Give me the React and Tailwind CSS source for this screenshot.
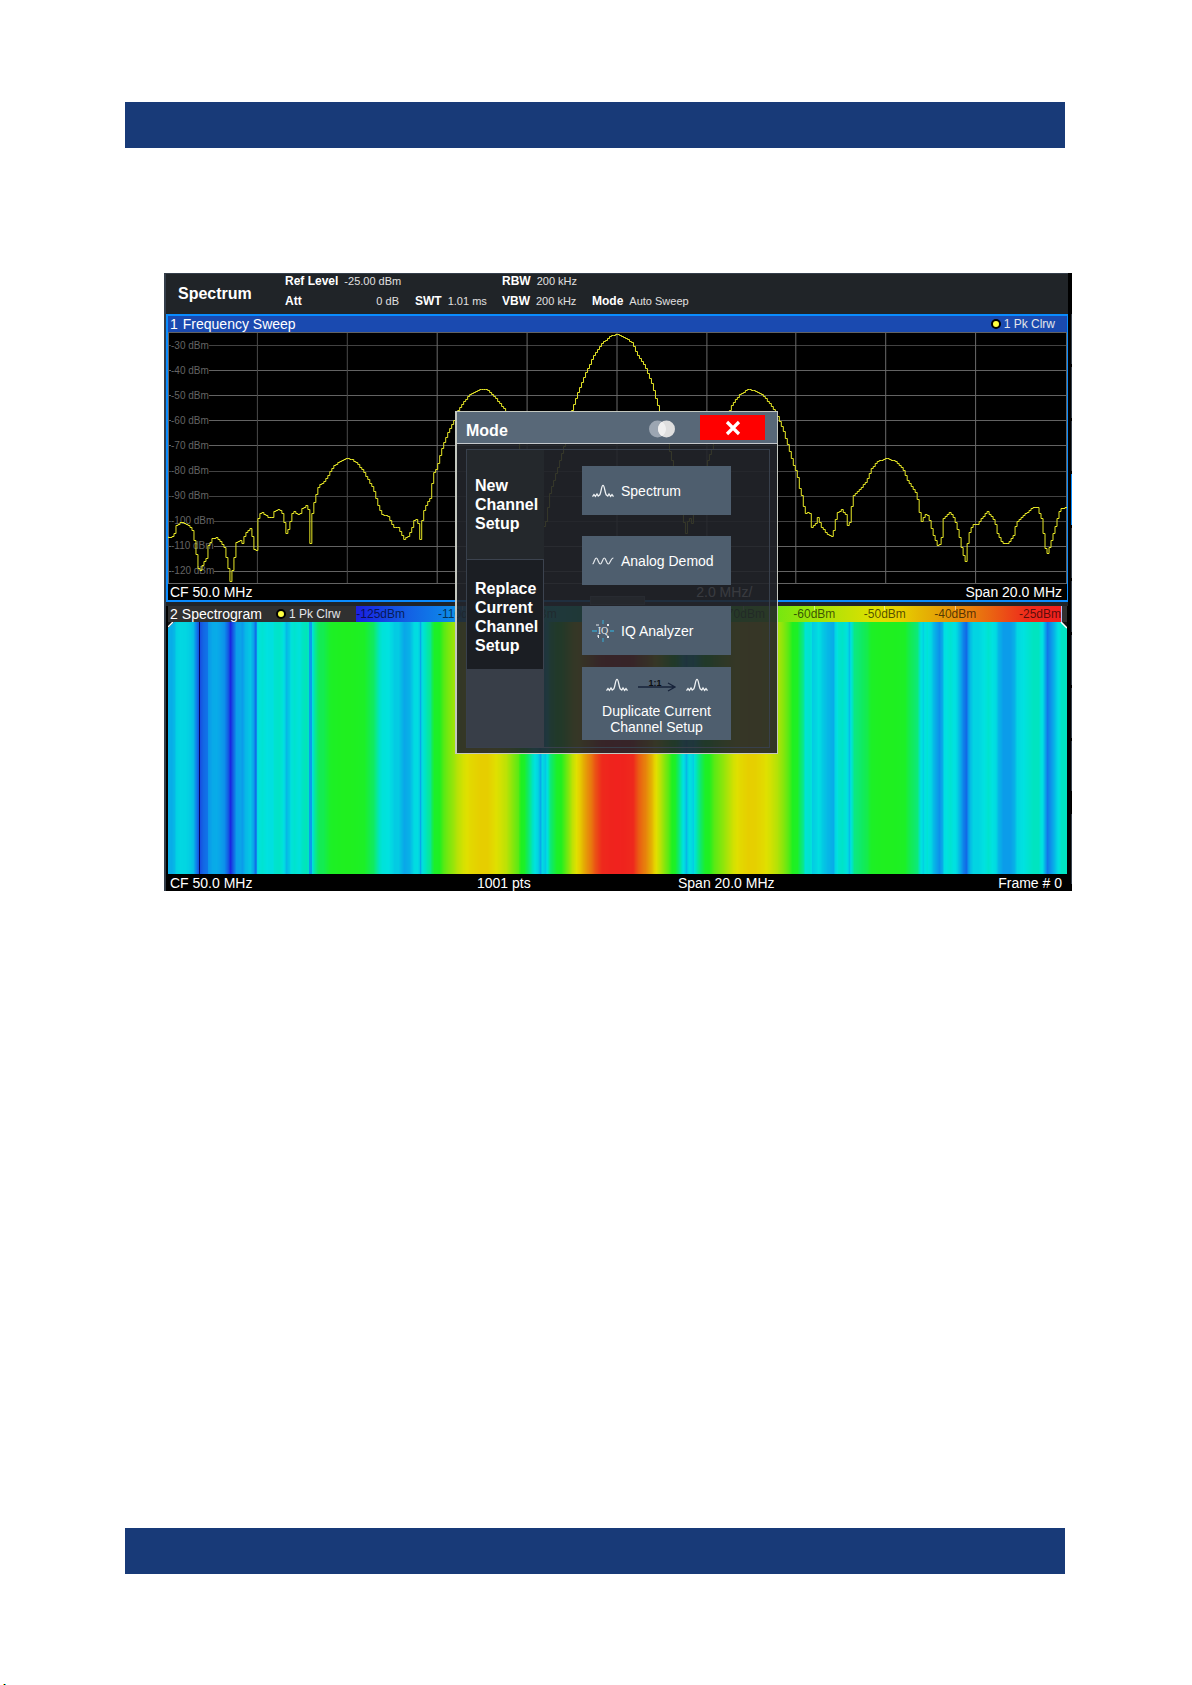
import React from 'react';

const TRACE = [
  [0, 204], [3, 205], [6, 201], [8, 193], [12, 190], [17, 191], [22, 195], [25, 200], [27, 215], [29, 228],
  [30, 236], [31, 256], [32, 238], [35, 230], [39, 225], [40, 213], [44, 206], [48, 205], [52, 209], [56, 215],
  [58, 225], [60, 236], [62, 249], [64, 238], [66, 225], [68, 210], [72, 208], [74, 211], [77, 201], [82, 196],
  [85, 208], [87, 226], [88, 218], [89, 190], [91, 182], [94, 180], [100, 185], [104, 185], [106, 179], [111, 177],
  [114, 181], [116, 190], [118, 201], [121, 195], [123, 182], [126, 179], [131, 183], [134, 176], [138, 173],
  [140, 177], [141, 211], [143, 211], [144, 181], [146, 170], [149, 158], [151, 152], [155, 151], [160, 143],
  [165, 134], [171, 129], [178, 126], [184, 127], [190, 132], [196, 140], [201, 149], [205, 155], [208, 166],
  [211, 176], [214, 182], [220, 184], [223, 190], [226, 195], [230, 195], [234, 203], [236, 207], [241, 203],
  [244, 195], [246, 188], [249, 187], [251, 195], [252, 207], [253, 195], [255, 180], [259, 171], [262, 166],
  [264, 151], [266, 140], [269, 135], [272, 123], [275, 113], [280, 100], [285, 90], [289, 80], [295, 70],
  [302, 62], [312, 57], [319, 57], [325, 63], [332, 71], [338, 79], [350, 111], [351, 118], [358, 150],
  [364, 175], [370, 195], [372, 206], [374, 190], [377, 196], [382, 161], [389, 138], [397, 111], [404, 78],
  [410, 60], [419, 38], [427, 21], [434, 11], [442, 4], [449, 2], [455, 4], [464, 10], [470, 23], [477, 33],
  [484, 51], [490, 73], [492, 80], [500, 111], [506, 136], [515, 185], [518, 201], [521, 183], [525, 194],
  [526, 181], [539, 131], [546, 111], [561, 80], [565, 71], [572, 62], [580, 57], [587, 58], [595, 63],
  [602, 71], [609, 82], [615, 96], [621, 115], [626, 133], [629, 140], [632, 156], [635, 166], [637, 181],
  [641, 179], [643, 183], [644, 195], [648, 191], [650, 185], [654, 195], [659, 201], [665, 205], [667, 191],
  [670, 180], [674, 177], [678, 182], [681, 199], [683, 180], [686, 163], [692, 157], [699, 149], [704, 136],
  [710, 129], [719, 126], [728, 129], [735, 136], [741, 150], [749, 161], [752, 180], [755, 193], [756, 185],
  [759, 181], [762, 188], [765, 200], [771, 215], [774, 205], [776, 186], [782, 180], [787, 186], [792, 205],
  [795, 220], [798, 229], [800, 211], [802, 200], [805, 192], [810, 192], [815, 185], [820, 179], [827, 188],
  [830, 201], [835, 211], [841, 211], [846, 203], [849, 190], [855, 184], [865, 175], [870, 175], [874, 186],
  [876, 201], [879, 224], [882, 215], [887, 198], [890, 186], [893, 176], [899, 175],
];

const COLORS = [
  [0, 240, 32, 30], [12, 238, 42, 28], [30, 232, 120, 14], [48, 228, 175, 4], [57, 230, 206, 0], [66, 224, 224, 0],
  [80, 184, 226, 6], [95, 136, 230, 12], [111, 90, 234, 20], [126, 31, 240, 31], [140, 28, 240, 40],
  [155, 16, 234, 96], [165, 10, 232, 140], [175, 0, 228, 192], [184, 0, 226, 224], [192, 2, 212, 226],
  [205, 8, 172, 232], [213, 12, 150, 234], [225, 16, 116, 232], [235, 20, 90, 226], [247, 24, 44, 228],
  [251, 28, 32, 224], [256, 8, 8, 90],
];

function interpolate(table, at) {
  const last = table[table.length - 1];
  if (at >= last[0]) return last.slice(1);
  const i = Math.max(0, table.findIndex((row) => row[0] > at) - 1);
  const a = table[i];
  const b = table[i + 1];
  const t = (at - a[0]) / (b[0] - a[0]);
  return a.slice(1).map((v, k) => v + (b[k + 1] - v) * t);
}

const colorAt = (depth) => `rgb(${interpolate(COLORS, depth).map(Math.round).join(',')})`;

const SAMPLES = Array.from({ length: 899 }, (_, x) => interpolate(TRACE, x)[0]);

const BINS = SAMPLES.map(colorAt);

const TRACE_PATH = SAMPLES.map((y, x) => {
  const level = Math.round(y) + 0.5;
  if (x === 0) return `M0 ${level}`;
  return x % 2 ? '' : `V${level}H${x + 2}`;
}).join('');

const SCALE = `linear-gradient(to right, ${Array.from({ length: 41 }, (_, i) => colorAt(251 - i * 6.27)).join(', ')})`;

const LEVELS = ['-30', '-40', '-50', '-60', '-70', '-80', '-90', '-100', '-110', '-120'];
const SCALE_LABELS = ['-110dBm', '-100dBm', '-90dBm', '-80dBm', '-70dBm', '-60dBm', '-50dBm', '-40dBm'];

function Param({ name, value }) {
  return (
    <div className="flex h-[14px] items-center justify-between gap-[6px] whitespace-nowrap">
      <dt className="text-xs font-bold">{name}</dt>
      <dd className="text-[11px] text-[#e0e0e0]">{value}</dd>
    </div>
  );
}

function TraceTag() {
  return (
    <span className="flex items-center gap-[3px] text-xs text-[#e4e6ea]">
      <span className="size-[10px] rounded-full border-2 border-black bg-[#ffff40]" />
      1 Pk Clrw
    </span>
  );
}

function Grid() {
  return (
    <svg className="col-start-1 row-start-1 h-full w-full" viewBox="0 0 900 252" preserveAspectRatio="none" shapeRendering="crispEdges" aria-hidden="true">
      <g stroke="#636363" fill="none">
        {LEVELS.map((level, i) => {
          const y = Math.round(13 + i * 25.1) + 0.5;
          return <line key={level} x1="0" x2="899" y1={y} y2={y} stroke={i === 0 || (i > 4 && i < 8) ? '#424242' : '#636363'} />;
        })}
        {Array.from({ length: 9 }, (_, i) => {
          const x = Math.round(89 + i * 89.9) + 0.5;
          return <line key={x} x1={x} x2={x} y1="0" y2="252" stroke={i < 2 ? '#4a4a4a' : '#6a6a6a'} />;
        })}
        <rect x="0.5" y="0.5" width="899" height="251" />
      </g>
    </svg>
  );
}

function SweepPanel() {
  return (
    <section className="border-2 border-r border-[#0a8cff] bg-black">
      <header className="flex h-4 items-center justify-between bg-[#1a4ab0] pr-3 pl-[2px] text-sm leading-4">
        <h2><span className="mr-[5px]">1</span>Frequency Sweep</h2>
        <TraceTag />
      </header>
      <div className="grid h-[252px]">
        <Grid />
        <div className="col-start-1 row-start-1 flex flex-col items-start pt-px pl-[3px] text-[10px] text-[#646464]">
          {LEVELS.map((level) => (
            <span key={level} className="flex h-[25px] items-center">
              <span className="bg-black leading-3">{level} dBm</span>
            </span>
          ))}
        </div>
        <svg className="col-start-1 row-start-1 h-full w-full overflow-hidden" viewBox="0 0 900 252" preserveAspectRatio="none" shapeRendering="crispEdges" role="img" aria-label="Frequency sweep trace">
          <path d={TRACE_PATH} fill="none" stroke="#e8e826" />
        </svg>
      </div>
      <footer className="flex h-4 items-center pr-[5px] pl-[2px] text-sm leading-4">
        <span className="w-[59%]">CF 50.0 MHz</span>
        <span className="grow">2.0 MHz/</span>
        <span>Span 20.0 MHz</span>
      </footer>
    </section>
  );
}

function SpectrogramPanel() {
  return (
    <section className="mt-1 border-r border-l-2 border-black bg-black">
      <header className="flex h-4 items-center bg-[#303030] pr-[5px] pl-[2px] text-sm leading-4">
        <h2 className="mr-[14px]"><span className="mr-1">2</span>Spectrogram</h2>
        <TraceTag />
        <div className="ml-4 grid h-4 grow grid-cols-10 border-r border-r-white/70 text-xs leading-4 text-black/65" style={{ background: SCALE }}>
          <span>-125dBm</span>
          {SCALE_LABELS.map((label) => (
            <span key={label} className="flex flex-col items-center">
              <span className="-mb-1 h-1 w-px bg-white/50" />
              {label}
            </span>
          ))}
          <span className="text-right">-25dBm</span>
        </div>
      </header>
      <div className="grid h-[252px]">
        <svg className="col-start-1 row-start-1 h-full w-full" viewBox="0 0 899 252" preserveAspectRatio="none" shapeRendering="crispEdges" role="img" aria-label="Spectrogram">
          {BINS.map((fill, i) => <rect key={i} x={i} width="1" height="252" fill={fill} />)}
        </svg>
        <div className="col-start-1 row-start-1 flex items-start justify-between">
          <svg className="size-[7px]" viewBox="0 0 7 7" aria-hidden="true"><path d="M0 0h6L0 6z" fill="#111" /><path d="M0 5L5 0" stroke="#fff" strokeWidth="1.5" /></svg>
          <svg className="size-[7px]" viewBox="0 0 7 7" aria-hidden="true"><path d="M1 0h6v6z" fill="#111" /><path d="M1 0L7 6" stroke="#fff" strokeWidth="1.5" /></svg>
        </div>
      </div>
      <footer className="flex h-[17px] items-center pr-[5px] pl-[2px] text-sm leading-4">
        <span className="w-[307px]">CF 50.0 MHz</span>
        <span className="w-[201px]">1001 pts</span>
        <span className="grow">Span 20.0 MHz</span>
        <span>Frame # 0</span>
      </footer>
    </section>
  );
}

function PeakIcon() {
  return (
    <svg className="h-[14px] w-[22px] shrink-0" viewBox="0 0 22 14" fill="none" stroke="#eef1f3" strokeWidth="1.3" aria-hidden="true">
      <path d="M.5 12.6L2 10.600l1.400 1.800 1.600-2.400 1.200 2 1.600-1.200C9.200 8.400 9.400 1.400 11 1.400s1.800 7 3.200 9.400l1.600 1.200 1.200-2 1.600 2.400 1.400-1.800 1.500 2" />
    </svg>
  );
}

function WaveIcon() {
  return (
    <svg className="h-[14px] w-[22px] shrink-0" viewBox="0 0 22 14" fill="none" stroke="#e4e8eb" strokeWidth="1.2" aria-hidden="true">
      <path d="M.6 10C2.2 9.600 2.600 4 4.300 4s2.200 6 4 6 2.300-6 4-6 2.200 6 4 6 2.400-6 5.100-6" />
    </svg>
  );
}

function IqIcon() {
  return (
    <svg className="h-[22px] w-[22px] shrink-0" viewBox="0 0 22 22" aria-hidden="true">
      <path d="M11 0v4M11 18v4M0 11h5M18 11h4" stroke="#3d9cc0" strokeWidth="1.3" />
      <g fill="#e4e8eb">
        <path d="M4 4.500h3v1H4zM15 4h2v2h-2zM5 15.500h2v1H5zM6 15h1v3H6zM15 16h2v2h-2z" />
        <text x="11" y="14" textAnchor="middle" fontFamily="Liberation Serif, serif" fontSize="10">IQ</text>
      </g>
    </svg>
  );
}

function ArrowIcon() {
  return (
    <svg className="h-[16px] w-[40px]" viewBox="0 0 40 16" aria-hidden="true">
      <path d="M1 10h36M31 6l7 4-7 4" fill="none" stroke="#17233a" strokeWidth="1.3" />
      <text x="18" y="9" textAnchor="middle" fontFamily="Liberation Sans, sans-serif" fontWeight="700" fontSize="9" fill="#0c0e12">1:1</text>
    </svg>
  );
}

function ModeButton({ icon, label }) {
  return (
    <button type="button" className="flex h-[49px] w-full items-center gap-[7px] bg-[#4e5e6e] pt-px pl-[10px] text-left text-sm">
      {icon}
      {label}
    </button>
  );
}

function ModeDialog() {
  return (
    <div role="dialog" aria-labelledby="mode-title" className="absolute top-[138px] left-[291px] flex h-[343px] w-[323px] flex-col border border-l-2 border-[#c4c8c0]">
      <header className="flex h-8 shrink-0 items-center border-b border-[#c4c8cc] bg-[#586878] pr-3 pl-[9px]">
        <h2 id="mode-title" className="grow pt-[7px] text-base font-bold">Mode</h2>
        <button type="button" aria-label="Transparency" className="mr-6 pt-[2px]">
          <svg className="h-[18px] w-[28px]" viewBox="0 0 28 18" aria-hidden="true">
            <circle cx="9.5" cy="9" r="8.5" fill="#9ca6b2" />
            <circle cx="18.5" cy="9" r="8.5" fill="#dfdfdf" />
            <path d="M14 1.800a8.500 8.500 0 0 1 0 14.400a8.500 8.500 0 0 1 0-14.400z" fill="#f0f0f0" />
          </svg>
        </button>
        <button type="button" aria-label="Close" className="flex h-[25px] w-[65px] items-center justify-center bg-[#ff0000]">
          <svg className="size-4" viewBox="0 0 16 16" aria-hidden="true"><path d="M2 2l12 12M14 2L2 14" stroke="#fff" strokeWidth="3.2" /></svg>
        </button>
      </header>
      <div className="flex min-h-0 grow bg-[#22252a]/90 pt-[5px] pr-[7px] pb-[5px] pl-[9px]">
        <div className="flex grow border border-[#38404c]">
          <div role="tablist" aria-orientation="vertical" className="flex w-[77px] flex-col bg-[#383e48] text-base leading-[19px] font-bold">
            <button type="button" role="tab" aria-selected="true" className="h-[109px] bg-[#24282c] pl-2 text-left">New<br />Channel<br />Setup</button>
            <button type="button" role="tab" aria-selected="false" className="h-[110px] border-t border-r border-[#3c434f] bg-[#1b1e23] pt-1 pl-2 text-left">Replace<br />Current<br />Channel<br />Setup</button>
          </div>
          <div className="flex grow flex-col px-[38px] pt-4">
            <ModeButton icon={<PeakIcon />} label="Spectrum" />
            <div className="h-[21px]" />
            <ModeButton icon={<WaveIcon />} label="Analog Demod" />
            <div className="h-[21px]" />
            <ModeButton icon={<IqIcon />} label="IQ Analyzer" />
            <button type="button" className="mt-3 flex h-[73px] w-full flex-col items-center bg-[#4e5e6e] pt-[10px] text-sm leading-4">
              <span className="mb-[10px] flex items-center gap-[9px]">
                <PeakIcon />
                <ArrowIcon />
                <PeakIcon />
              </span>
              Duplicate Current<br />Channel Setup
            </button>
          </div>
        </div>
      </div>
    </div>
  );
}

function SideStrip() {
  return (
    <div className="flex w-1 shrink-0 flex-col items-end gap-[3px] bg-black pt-[41px]">
      <span className="h-[50px] w-px bg-[#38424e]" />
      <span className="h-[51px] w-px bg-[#38424e]" />
      <span className="h-[50px] w-px bg-[#38424e]" />
      <span className="h-[51px] w-px bg-[#0a8cff]" />
      <span className="h-[50px] w-px bg-[#38424e]" />
      <span className="h-[51px] w-px bg-[#38424e]" />
      <span className="h-[50px] w-px bg-[#38424e]" />
      <span className="h-[50px] w-px bg-[#38424e]" />
      <span className="h-[50px] w-px bg-[#38424e]" />
      <span className="mt-5 h-[70px] w-px bg-[#38424e]" />
    </div>
  );
}

export default function App() {
  return (
    <div className="bg-white font-['Liberation_Sans',Arial,sans-serif] text-white">
      <div className="pt-[102px]">
        <header className="mr-[127px] ml-[125px] h-[46px] bg-[#183a78]" />
      </div>
      <main className="relative mt-[125px] mr-[120px] ml-[164px] flex bg-[#202428]">
        <div className="min-w-0 grow border-t border-l-2 border-[#343e4a]">
          <header className="flex h-10">
            <h1 className="w-[119px] pl-3 text-base leading-10 font-bold">Spectrum</h1>
            <div className="flex gap-4">
              <dl className="flex w-[114px] flex-col gap-[6px]"><Param name="Ref Level" value="-25.00 dBm" /><Param name="Att" value="0 dB" /></dl>
              <dl className="w-[71px] pt-5"><Param name="SWT" value="1.01 ms" /></dl>
              <dl className="flex w-[74px] flex-col gap-[6px]"><Param name="RBW" value="200 kHz" /><Param name="VBW" value="200 kHz" /></dl>
              <dl className="pt-5"><Param name="Mode" value="Auto Sweep" /></dl>
            </div>
          </header>
          <SweepPanel />
          <SpectrogramPanel />
        </div>
        <SideStrip />
        <div className="absolute top-[323px] left-[426px] h-[9px] w-[55px] border border-[#606870] bg-[#40464c]" />
        <ModeDialog />
      </main>
      <footer className="mt-[637px] mr-[127px] ml-[125px] h-[46px] bg-[#183a78]" />
      <div className="mt-[110px] flex h-px pl-[3px]">
        <span className="w-px bg-yellow-400" />
        <span className="w-px bg-black" />
        <span className="w-px bg-cyan-400" />
      </div>
    </div>
  );
}
